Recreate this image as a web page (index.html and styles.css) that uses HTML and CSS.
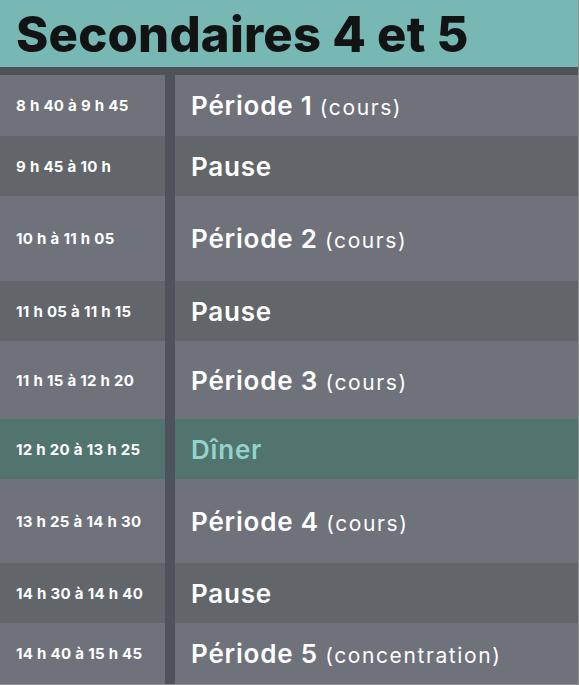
FILE: index.html
```html
<!DOCTYPE html>
<html lang="fr">
<head>
<meta charset="utf-8">
<title>Horaire</title>
<link rel="stylesheet" href="styles.css">
</head>
<body>
<div class="page">
  <header class="title-bar"><h1>Secondaires 4 et 5</h1></header>
  <div class="schedule">
    <div class="row cours h61"><div class="time"><p>8 h 40 à 9 h 45</p></div><div class="label"><p><b>Période 1</b> <span>(cours)</span></p></div></div>
    <div class="row pause h60"><div class="time"><p>9 h 45 à 10 h</p></div><div class="label"><p><b>Pause</b></p></div></div>
    <div class="row cours h85"><div class="time"><p>10 h à 11 h 05</p></div><div class="label"><p><b>Période 2</b> <span>(cours)</span></p></div></div>
    <div class="row pause h60"><div class="time"><p>11 h 05 à 11 h 15</p></div><div class="label"><p><b>Pause</b></p></div></div>
    <div class="row cours h78"><div class="time"><p>11 h 15 à 12 h 20</p></div><div class="label"><p><b>Période 3</b> <span>(cours)</span></p></div></div>
    <div class="row diner h60"><div class="time"><p>12 h 20 à 13 h 25</p></div><div class="label"><p><b>Dîner</b></p></div></div>
    <div class="row cours h84"><div class="time"><p>13 h 25 à 14 h 30</p></div><div class="label"><p><b>Période 4</b> <span>(cours)</span></p></div></div>
    <div class="row pause h60"><div class="time"><p>14 h 30 à 14 h 40</p></div><div class="label"><p><b>Pause</b></p></div></div>
    <div class="row cours h61"><div class="time"><p>14 h 40 à 15 h 45</p></div><div class="label"><p><b>Période 5</b> <span>(concentration)</span></p></div></div>
  </div>
</div>
</body>
</html>
```
FILE: styles.css
```css
html, body {
  margin: 0;
  padding: 0;
  background: #8b8e93;
}
body {
  width: 579px;
  height: 685px;
  overflow: hidden;
  font-family: "Inter", "Noto Sans", sans-serif;
}
.page {
  width: 578px;
  background: #4e525a;
}
.title-bar {
  height: 67px;
  background: #78b8b4;
  display: flex;
  align-items: center;
  padding-left: 16px;
  margin-bottom: 8px;
}
.title-bar h1 {
  margin: 0;
  font-size: 49px;
  font-weight: 800;
  color: #121414;
  letter-spacing: 0.2px;
  line-height: 1;
  padding-top: 2px;
}
.schedule {
  display: flex;
  flex-direction: column;
}
.row {
  display: grid;
  grid-template-columns: 165px 1fr;
  column-gap: 10px;
}
.h60 { height: 60px; }
.h61 { height: 61px; }
.h78 { height: 78px; }
.h84 { height: 84px; }
.h85 { height: 85px; }
.time, .label {
  display: flex;
  align-items: center;
}
.time p, .label p {
  margin: 0;
}
.time {
  padding-left: 16px;
  color: #ffffff;
  font-size: 15px;
  font-weight: 700;
  letter-spacing: 0.3px;
}
.label {
  padding-left: 16px;
  color: #ffffff;
  font-size: 26px;
}
.label b {
  font-weight: 600;
  letter-spacing: 0.8px;
}
.label span {
  font-size: 21px;
  font-weight: 400;
  letter-spacing: 1.6px;
}
.cours .time, .cours .label { background: #6f727b; }
.pause .time, .pause .label { background: #62666a; }
.diner .time, .diner .label { background: #52746f; }
.diner .label { color: #94d3cb; }
```
